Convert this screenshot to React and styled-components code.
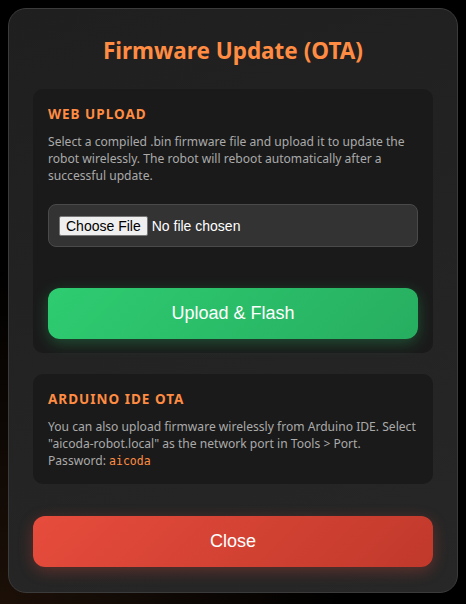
import React from "react";
import styled, { createGlobalStyle } from "styled-components";

const GlobalStyle = createGlobalStyle`
  html, body {
    margin: 0;
    padding: 0;
    background: radial-gradient(circle at 0% 100%, #1c1008 0%, #000000 45%);
    background-color: #000000;
    min-height: 100vh;
  }
  * { box-sizing: border-box; }
`;

const Page = styled.div`
  padding: 8px 8px 12px 8px;
  font-family: "Noto Sans", "Open Sans", sans-serif;
`;

const Modal = styled.div`
  width: 450px;
  background: linear-gradient(160deg, #1f1f1f 0%, #272727 100%);
  border: 1px solid #3b3b3b;
  border-radius: 18px;
  padding: 24px 24px 25px 24px;
  display: flex;
  flex-direction: column;
`;

const Title = styled.h2`
  margin: 3px 0 23px 0;
  text-align: center;
  color: #ff8c42;
  font-size: 22.5px;
  font-weight: 700;
  line-height: 30px;
`;

const Section = styled.div`
  background: #1a1a1a;
  border-radius: 10px;
  padding: 15px 15px 14px 15px;
  margin-bottom: ${(p) => p.$gap || 0}px;
`;

const SectionTitle = styled.h3`
  margin: 0 0 9px 0;
  color: #ff8c42;
  font-size: 13.5px;
  font-weight: 700;
  letter-spacing: 1px;
  text-transform: uppercase;
  line-height: 20px;
`;

const Text = styled.p`
  margin: 0;
  color: #aaaaaa;
  font-size: 12.1px;
  line-height: 17px;
`;

const Code = styled.code`
  font-family: "DejaVu Sans Mono", "Liberation Mono", monospace;
  font-size: 11.5px;
  line-height: 17px;
  color: #ff8c42;
`;

const FileBox = styled.div`
  margin-top: 20px;
  background: #333333;
  border: 1px solid #4a4a4a;
  border-radius: 8px;
  padding: 10px;
  height: 43px;
  display: flex;
  align-items: center;
  font-family: "Liberation Sans", Arial, sans-serif;
  font-size: 14px;
  color: #ffffff;

  input {
    font-family: inherit;
    font-size: 14px;
    color: #ffffff;
  }
  input::file-selector-button {
    font-family: "Liberation Sans", Arial, sans-serif;
    font-size: 14px;
    background: #efefef;
    color: #000000;
    border: 1px solid #767676;
    border-radius: 2px;
    padding: 1px 6px;
    margin-right: 4px;
  }
`;

const ActionButton = styled.button`
  width: 100%;
  height: 51px;
  border: none;
  border-radius: 12px;
  font-family: "Liberation Sans", Arial, sans-serif;
  font-size: 18px;
  color: #ffffff;
  cursor: pointer;
  margin-top: ${(p) => p.$top || 0}px;
  background: ${(p) =>
    p.$tone === "red"
      ? "linear-gradient(135deg, #e74c3c 0%, #c0392b 100%)"
      : "linear-gradient(135deg, #2ecc71 0%, #27ae60 100%)"};
  box-shadow: ${(p) =>
    p.$tone === "red"
      ? "0 4px 15px rgba(231, 76, 60, 0.3)"
      : "0 4px 15px rgba(46, 204, 113, 0.3)"};
`;

export default function App() {
  return (
    <>
      <GlobalStyle />
      <Page>
        <Modal>
          <Title>Firmware Update (OTA)</Title>
          <Section $gap={21}>
            <SectionTitle>Web Upload</SectionTitle>
            <Text>
              Select a compiled .bin firmware file and upload it to update the
              robot wirelessly. The robot will reboot automatically after a
              successful update.
            </Text>
            <FileBox>
              <input type="file" accept=".bin" />
            </FileBox>
            <ActionButton $top={41}>Upload &amp; Flash</ActionButton>
          </Section>
          <Section>
            <SectionTitle>Arduino IDE OTA</SectionTitle>
            <Text>
              You can also upload firmware wirelessly from Arduino IDE. Select
              "aicoda-robot.local" as the network port in Tools &gt; Port.
              Password: <Code>aicoda</Code>
            </Text>
          </Section>
          <ActionButton $tone="red" $top={32}>
            Close
          </ActionButton>
        </Modal>
      </Page>
    </>
  );
}
